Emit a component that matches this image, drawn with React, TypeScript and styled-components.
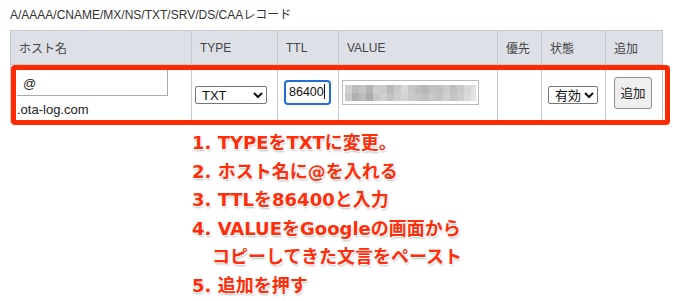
import * as React from "react";
import styled, { createGlobalStyle } from "styled-components";

const GlobalStyle = createGlobalStyle`
  html, body {
    margin: 0;
    padding: 0;
    background: #fff;
  }
  body {
    font-family: "Liberation Sans", "Noto Sans CJK JP", Arial, sans-serif;
    color: #333;
  }
`;

const Page = styled.div`
  width: 673px;
  height: 301px;
  padding: 0 10px;
  box-sizing: border-box;
  overflow: hidden;
`;

const Title = styled.div`
  padding-top: 7px;
  height: 30px;
  box-sizing: border-box;
  font-size: 12px;
  line-height: 16px;
  color: #333;
`;

const TableWrap = styled.div`
  position: relative;
  width: 652px;
`;

const Table = styled.table`
  width: 652px;
  border-collapse: collapse;
  table-layout: fixed;
  font-size: 12px;
`;

const Th = styled.th<{ $w: number }>`
  width: ${(p) => p.$w}px;
  height: 34px;
  padding: 0 8px;
  box-sizing: border-box;
  background: #dde1e7;
  border: 1px solid #c6c9ce;
  text-align: left;
  font-weight: normal;
  color: #444;
  font-size: 12px;
`;

const Td = styled.td<{ $pl?: number }>`
  height: 58px;
  padding: 0 0 0 ${(p) => (p.$pl ?? 0)}px;
  box-sizing: border-box;
  border: 1px solid #c6c9ce;
  vertical-align: middle;
`;

const HostInput = styled.div`
  width: 151px;
  height: 26px;
  box-sizing: border-box;
  border: 1px solid #aaa;
  border-top: none;
  border-left: none;
  padding-left: 6px;
  font-size: 13px;
  line-height: 28px;
  color: #222;
  margin-top: 1px;
`;

const Domain = styled.div`
  font-size: 13px;
  line-height: 16px;
  margin-top: 6px;
  color: #222;
`;

const Select = styled.select<{ $w: number }>`
  width: ${(p) => p.$w}px;
  height: 18px;
  font-family: "Liberation Sans", "Noto Sans CJK JP", sans-serif;
  font-size: 13px;
  color: #111;
  background: #fff;
  border: 1px solid #767676;
  border-radius: 2px;
  padding: 0 0 0 2px;
  margin-top: 3px;
`;

const TtlField = styled.div`
  width: 47px;
  height: 25px;
  box-sizing: border-box;
  border: 2px solid #1f6fd6;
  border-radius: 4px;
  padding-left: 3px;
  font-size: 12.5px;
  line-height: 21px;
  color: #111;
  margin-top: -3px;
`;

const Caret = styled.span`
  display: inline-block;
  width: 1px;
  height: 15px;
  background: #111;
  vertical-align: -3px;
`;

const ValueBox = styled.div`
  width: 137px;
  height: 25px;
  box-sizing: border-box;
  border: 1px solid #b9b9b9;
  padding: 4px 2px;
  margin-top: -3px;
`;

const AddButton = styled.button`
  width: 38px;
  height: 32px;
  font-family: "Noto Sans CJK JP", sans-serif;
  font-size: 12.5px;
  color: #222;
  background: #efefef;
  border: 1px solid #8f8f8f;
  border-radius: 3px;
  padding: 0;
  margin-top: -2px;
`;

const Highlight = styled.div`
  position: absolute;
  left: 1px;
  top: 35px;
  width: 659px;
  height: 60px;
  box-sizing: border-box;
  border: 5px solid #ff2a00;
  border-radius: 4px;
  pointer-events: none;
`;

const Steps = styled.div`
  margin: 6px 0 0 182px;
  font-family: "DejaVu Sans", "Noto Sans CJK JP", sans-serif;
  font-weight: 700;
  font-size: 18px;
  line-height: 28.6px;
  color: #ff2d0a;
  text-shadow: 0 0 1px #fff, 1px 1px 0 #fff, 1px 2px 2px rgba(0, 0, 0, 0.25);
  white-space: nowrap;
`;

const Step = styled.div<{ $indent?: boolean }>`
  padding-left: ${(p) => (p.$indent ? 20 : 0)}px;
`;

// pixelated blur over the value
const mosaic = [
  ["#d0d0d0", "#bcbcbc", "#c4c4c4", "#b4b4b4", "#cdcdcd", "#c9c9c9", "#b8b8b8", "#c8c8c8", "#d9d9d9", "#c6c6c6", "#bdbdbd", "#b6b6b6", "#c2c2c2", "#c0c0c0", "#cbcbcb", "#bfbfbf", "#c9c9c9", "#d6d6d6", "#e0e0e0"],
  ["#c8c8c8", "#b0b0b0", "#bdbdbd", "#acacac", "#c6c6c6", "#cfcfcf", "#c1c1c1", "#cdcdcd", "#d3d3d3", "#cacaca", "#c4c4c4", "#bfbfbf", "#c9c9c9", "#c3c3c3", "#cfcfcf", "#c4c4c4", "#cecece", "#dadada", "#e4e4e4"],
];

const Mosaic = () => (
  <svg width="131" height="16" viewBox="0 0 131 16">
    {mosaic.map((row, r) =>
      row.map((c, i) => (
        <rect key={`${r}-${i}`} x={i * 7} y={r * 8} width="7" height="8" fill={c} />
      ))
    )}
  </svg>
);

const App: React.FC = () => {
  return (
    <Page>
      <GlobalStyle />
      <Title>A/AAAA/CNAME/MX/NS/TXT/SRV/DS/CAAレコード</Title>
      <TableWrap>
        <Table>
          <thead>
            <tr>
              <Th $w={181}>ホスト名</Th>
              <Th $w={86}>TYPE</Th>
              <Th $w={61}>TTL</Th>
              <Th $w={159}>VALUE</Th>
              <Th $w={44}>優先</Th>
              <Th $w={64}>状態</Th>
              <Th $w={57}>追加</Th>
            </tr>
          </thead>
          <tbody>
            <tr>
              <Td $pl={6}>
                <HostInput>@</HostInput>
                <Domain>.ota-log.com</Domain>
              </Td>
              <Td $pl={3}>
                <Select $w={72} defaultValue="TXT">
                  <option>TXT</option>
                </Select>
              </Td>
              <Td $pl={6}>
                <TtlField>
                  86400
                  <Caret />
                </TtlField>
              </Td>
              <Td $pl={3}>
                <ValueBox>
                  <Mosaic />
                </ValueBox>
              </Td>
              <Td />
              <Td $pl={6}>
                <Select $w={50} defaultValue="有効">
                  <option>有効</option>
                </Select>
              </Td>
              <Td $pl={8}>
                <AddButton>追加</AddButton>
              </Td>
            </tr>
          </tbody>
        </Table>
        <Highlight />
      </TableWrap>
      <Steps>
        <Step>1. TYPEをTXTに変更。</Step>
        <Step>2. ホスト名に@を入れる</Step>
        <Step>3. TTLを86400と入力</Step>
        <Step>4. VALUEをGoogleの画面から</Step>
        <Step $indent>コピーしてきた文言をペースト</Step>
        <Step>5. 追加を押す</Step>
      </Steps>
    </Page>
  );
};

export default App;
